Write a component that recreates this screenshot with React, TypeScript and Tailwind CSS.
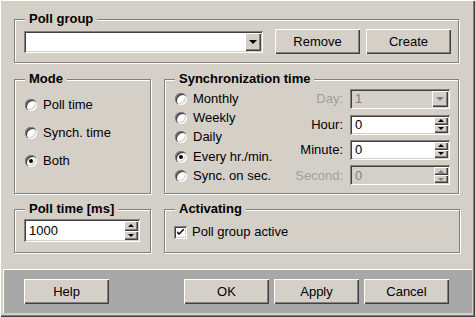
import React from "react";

const raised =
  "bg-[#d4d0c8] shadow-[inset_1px_1px_0_#ffffff,inset_-1px_-1px_0_#404040,inset_-2px_-2px_0_#808080]";
const sunken =
  "shadow-[inset_1px_1px_0_#808080,inset_-1px_-1px_0_#ffffff,inset_2px_2px_0_#404040,inset_-2px_-2px_0_#d4d0c8]";

const Group = ({
  label,
  className,
  children,
}: {
  label: string;
  className: string;
  children?: React.ReactNode;
}) => (
  <div
    className={`relative border border-[#808080] shadow-[inset_1px_1px_0_#ffffff,1px_1px_0_#ffffff] ${className}`}
  >
    <div className="absolute -top-[9px] left-[10px] bg-[#d4d0c8] px-[4px] text-[13px] leading-[16px] font-bold text-black">
      {label}
    </div>
    {children}
  </div>
);

const Button = ({ label, className = "" }: { label: string; className?: string }) => (
  <div
    className={`flex h-[25px] w-[85px] items-center justify-center text-[13px] text-black ${raised} ${className}`}
  >
    {label}
  </div>
);

const Radio = ({ label, checked = false }: { label: string; checked?: boolean }) => (
  <div className="flex items-center gap-[6px]">
    <span className="relative flex h-[12px] w-[12px] items-center justify-center rounded-full bg-white shadow-[inset_1px_1px_0_#808080,inset_2px_2px_0_#404040,inset_-1px_-1px_0_#ffffff,inset_-2px_-2px_0_#d4d0c8]">
      {checked && <span className="h-[4px] w-[4px] rounded-full bg-black" />}
    </span>
    <span className="text-[13px] leading-[16px] text-black">{label}</span>
  </div>
);

const Spin = ({ disabled = false, small = false }: { disabled?: boolean; small?: boolean }) => {
  const arrow = disabled ? "#808080" : "#000000";
  return (
    <div className="flex w-[16px] flex-col py-[2px] pr-[2px]">
      <div className={`flex flex-1 items-center justify-center ${raised}`}>
        <span
          className="h-0 w-0 border-x-[3px] border-b-[3px] border-x-transparent"
          style={{ borderBottomColor: arrow }}
        />
      </div>
      <div className={`flex flex-1 items-center justify-center ${raised}`}>
        <span
          className="h-0 w-0 border-x-[3px] border-t-[3px] border-x-transparent"
          style={{ borderTopColor: arrow }}
        />
      </div>
      {small && null}
    </div>
  );
};

const SpinInput = ({
  value,
  className,
  disabled = false,
}: {
  value: string;
  className: string;
  disabled?: boolean;
}) => (
  <div
    className={`flex ${sunken} ${disabled ? "bg-[#d4d0c8]" : "bg-white"} ${className}`}
  >
    <div
      className={`flex flex-1 items-center pl-[5px] text-[13px] ${disabled ? "text-[#808080]" : "text-black"}`}
    >
      {value}
    </div>
    <Spin disabled={disabled} />
  </div>
);

export default function App() {
  return (
    <div
      className="flex h-[317px] w-[475px] flex-col bg-[#d4d0c8] shadow-[inset_1px_1px_0_#ffffff,inset_-1px_-1px_0_#404040,inset_-2px_-2px_0_#808080]"
      style={{ fontFamily: '"Liberation Sans", Arial, sans-serif' }}
    >
      <div className="flex flex-col px-[14px] pt-[19px]">
        {/* Poll group */}
        <Group label="Poll group" className="h-[44px] w-[445px]">
          <div className="flex items-center pt-[9px] pl-[9px]">
            <div className={`flex h-[22px] w-[239px] bg-white ${sunken}`}>
              <div className="flex-1" />
              <div className="py-[2px] pr-[2px]">
                <div className={`flex h-[18px] w-[16px] items-center justify-center ${raised}`}>
                  <span className="h-0 w-0 border-x-[4px] border-t-[4px] border-x-transparent border-t-black" />
                </div>
              </div>
            </div>
            <Button label="Remove" className="ml-[12px] w-[84px]" />
            <Button label="Create" className="ml-[6px] w-[84px]" />
          </div>
        </Group>

        {/* Mode + Synchronization */}
        <div className="mt-[16px] flex">
          <Group label="Mode" className="h-[115px] w-[137px]">
            <div className="flex flex-col gap-[12px] pt-[17px] pl-[10px]">
              <Radio label="Poll time" />
              <Radio label="Synch. time" />
              <Radio label="Both" checked />
            </div>
          </Group>

          <Group label="Synchronization time" className="ml-[13px] h-[115px] w-[295px]">
            <div className="flex justify-between pt-[9px] pr-[8px] pl-[10px]">
              <div className="flex flex-col">
                {["Monthly", "Weekly", "Daily", "Every hr./min.", "Sync. on sec."].map((l) => (
                  <div key={l} className="flex h-[19.3px] items-center">
                    <Radio label={l} checked={l === "Every hr./min."} />
                  </div>
                ))}
              </div>
              <div className="grid grid-cols-[auto_100px] items-center gap-x-[7px] gap-y-[5px]">
                <span className="text-right text-[13px] text-[#a0a0a0]">Day:</span>
                <div className={`flex h-[20px] bg-[#d4d0c8] ${sunken}`}>
                  <div className="flex flex-1 items-center pl-[5px] text-[13px] text-[#808080]">1</div>
                  <div className="py-[2px] pr-[2px]">
                    <div className={`flex h-[16px] w-[16px] items-center justify-center ${raised}`}>
                      <span className="h-0 w-0 border-x-[4px] border-t-[4px] border-x-transparent border-t-[#808080]" />
                    </div>
                  </div>
                </div>
                <span className="text-right text-[13px] text-black">Hour:</span>
                <SpinInput value="0" className="h-[20px]" />
                <span className="text-right text-[13px] text-black">Minute:</span>
                <SpinInput value="0" className="h-[20px]" />
                <span className="text-right text-[13px] text-[#a0a0a0]">Second:</span>
                <SpinInput value="0" className="h-[20px]" disabled />
              </div>
            </div>
          </Group>
        </div>

        {/* Poll time + Activating */}
        <div className="mt-[15px] flex">
          <Group label="Poll time [ms]" className="h-[44px] w-[137px]">
            <div className="pt-[9px] pl-[9px]">
              <SpinInput value="1000" className="h-[23px] w-[116px]" />
            </div>
          </Group>
          <Group label="Activating" className="ml-[13px] h-[44px] w-[296px]">
            <div className="flex items-center gap-[5px] pt-[14px] pl-[9px]">
              <span className={`flex h-[13px] w-[13px] items-center justify-center bg-white ${sunken}`}>
                <svg width="7" height="7" viewBox="0 0 7 7">
                  <path d="M0 2 L0 4 L2 6 L7 1 L7 -1 L2 4 Z" fill="#000" />
                </svg>
              </span>
              <span className="text-[13px] leading-[16px] text-black">Poll group active</span>
            </div>
          </Group>
        </div>
      </div>

      {/* Footer bar */}
      <div className="mx-[3px] mt-auto mb-[4px] flex h-[44px] items-center border-t border-l border-white bg-[#a8a8a8] pl-[20px]">
        <Button label="Help" />
        <Button label="OK" className="ml-[75px]" />
        <Button label="Apply" className="ml-[5px]" />
        <Button label="Cancel" className="ml-[5px]" />
      </div>
    </div>
  );
}
